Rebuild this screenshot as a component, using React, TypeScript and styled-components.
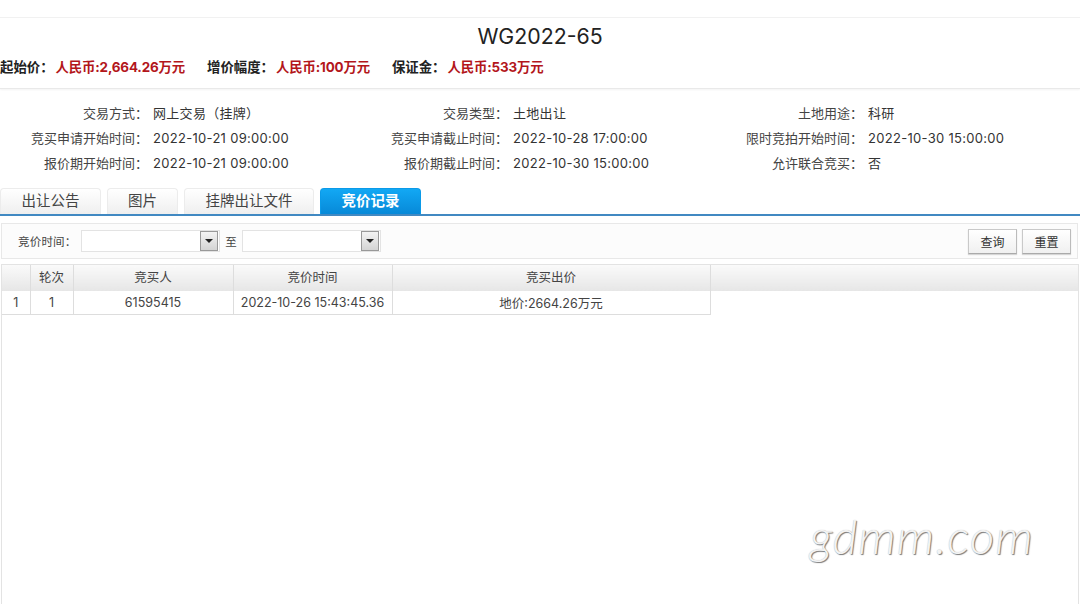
import React from 'react'
import styled, { createGlobalStyle } from 'styled-components'

const FONT = `Inter, "Noto Sans CJK SC", sans-serif`

const GlobalStyle = createGlobalStyle`
  html, body {
    margin: 0;
    padding: 0;
    background: #fff;
  }
  body {
    font-family: ${FONT};
  }
`

const Page = styled.div`
  position: relative;
  width: 1080px;
  height: 604px;
  overflow: hidden;
  display: flex;
  flex-direction: column;
  background: #fff;
  color: #333;
`

const TopStrip = styled.div`
  height: 17px;
  flex: none;
  border-bottom: 1px solid #f1f1f1;
`

const Header = styled.header`
  height: 71px;
  flex: none;
  box-sizing: border-box;
  border-bottom: 1px solid #e9e9e9;
  box-shadow: 0 1px 2px rgba(0, 0, 0, 0.05);
`

const Title = styled.h1`
  margin: 0;
  padding-top: 3px;
  height: 33px;
  box-sizing: border-box;
  font-size: 21.3px;
  line-height: 30px;
  font-weight: 400;
  text-align: center;
  color: #222;
`

const PriceRow = styled.div`
  display: flex;
  gap: 22px;
  height: 30px;
  align-items: center;
  font-size: 13.4px;
  font-weight: 700;
  color: #222;
`

const Price = styled.span`
  margin-left: 2px;
  letter-spacing: -0.15px;
  color: #b3161b;
`

const InfoGrid = styled.div`
  display: grid;
  grid-template-columns: 148px 212px 148px 208px 147px 1fr;
  grid-auto-rows: 25px;
  padding-top: 11px;
  height: 99px;
  flex: none;
  box-sizing: border-box;
  font-size: 13px;
  align-items: center;
`

const InfoLabel = styled.div`
  text-align: right;
  color: #444;
  white-space: nowrap;
`

const InfoValue = styled.div`
  padding-left: 5px;
  letter-spacing: 0.3px;
  color: #333;
  white-space: nowrap;
`

const TabBar = styled.div`
  display: flex;
  gap: 6px;
  height: 28px;
  flex: none;
  box-sizing: border-box;
  border-bottom: 2px solid #4189c2;
`

const Tab = styled.div<{ $active?: boolean; $width: number }>`
  width: ${({ $width }) => $width}px;
  height: 26px;
  padding-bottom: 5px;
  box-sizing: border-box;
  border: 1px solid ${({ $active }) => ($active ? '#0b9ae8' : '#ececec')};
  border-bottom: none;
  border-radius: 4px 4px 0 0;
  display: flex;
  align-items: center;
  justify-content: center;
  font-size: 14.5px;
  font-weight: ${({ $active }) => ($active ? 700 : 400)};
  color: ${({ $active }) => ($active ? '#fff' : '#444')};
  background: ${({ $active }) =>
    $active ? 'linear-gradient(#12a8f4, #0789d8)' : 'linear-gradient(#fff, #efefef)'};
`

const Toolbar = styled.div`
  margin: 7px 2px 0 1px;
  height: 36px;
  flex: none;
  box-sizing: border-box;
  border: 1px solid #e8e8e8;
  background: #fcfcfc;
  display: flex;
  align-items: center;
  padding: 0 6px 0 16px;
  font-size: 11.5px;
  color: #444;
`

const FieldLabel = styled.span`
  width: 63px;
  flex: none;
  letter-spacing: 0.2px;
  white-space: nowrap;
`

const Combo = styled.div`
  width: 139px;
  height: 22px;
  flex: none;
  box-sizing: border-box;
  border: 1px solid #e3e3e3;
  background: #fff;
  display: flex;
  justify-content: flex-end;
  align-items: center;
`

const ComboButton = styled.div`
  width: 18px;
  height: 20px;
  margin-right: 1px;
  box-sizing: border-box;
  border: 1px solid #999;
  background: linear-gradient(#f3f3f3, #d4d4d4);
  display: flex;
  align-items: center;
  justify-content: center;
`

const ComboArrow = styled.span`
  width: 0;
  height: 0;
  border-left: 4px solid transparent;
  border-right: 4px solid transparent;
  border-top: 4px solid #222;
`

const RangeWord = styled.span`
  width: 22px;
  flex: none;
  text-align: center;
`

const Spacer = styled.div`
  flex: 1;
`

const ActionButton = styled.button`
  width: 49px;
  height: 25px;
  padding: 0;
  margin-left: 5px;
  box-sizing: border-box;
  border: 1px solid #c9c9c9;
  border-bottom-color: #aaa;
  border-right-color: #bbb;
  background: linear-gradient(#fff, #f0f0f0);
  box-shadow: 0 1px 1px rgba(0, 0, 0, 0.15);
  font-family: ${FONT};
  font-size: 12px;
  color: #333;
`

const TablePanel = styled.div`
  margin: 5px 1px 0 1px;
  flex: 1;
  border: 1px solid #e3e3e3;
  border-bottom: none;
`

const Grid = styled.table`
  width: 100%;
  table-layout: fixed;
  border-collapse: collapse;
  font-size: 12.5px;
  color: #444;
`

const HeadCell = styled.th<{ $width?: number }>`
  ${({ $width }) => ($width ? `width: ${$width}px;` : '')}
  height: 26px;
  padding: 0 0 3px;
  box-sizing: border-box;
  font-weight: 400;
  text-align: center;
  border-right: 1px solid #ddd;
  background: linear-gradient(#fafafa, #e6e6e6);

  &:last-child {
    border-right: none;
  }
`

const BodyCell = styled.td<{ $blank?: boolean }>`
  height: 23px;
  padding: 0;
  text-align: center;
  ${({ $blank }) => ($blank ? '' : 'border-right: 1px solid #ddd; border-bottom: 1px solid #ddd;')}
`

const Watermark = styled.div`
  position: absolute;
  left: 810px;
  top: 506px;
  font-family: Lato, sans-serif;
  font-style: italic;
  font-weight: 300;
  font-size: 48px;
  line-height: 60px;
  letter-spacing: 1px;
  color: #f3f3f3;
  text-shadow: 1px 1px 1px #777, 0 0 1px #bbb;
  white-space: nowrap;
`

const info = [
  ['交易方式：', '网上交易（挂牌）', '交易类型：', '土地出让', '土地用途：', '科研'],
  ['竞买申请开始时间：', '2022-10-21 09:00:00', '竞买申请截止时间：', '2022-10-28 17:00:00', '限时竞拍开始时间：', '2022-10-30 15:00:00'],
  ['报价期开始时间：', '2022-10-21 09:00:00', '报价期截止时间：', '2022-10-30 15:00:00', '允许联合竞买：', '否'],
]

const tabs = [
  { label: '出让公告', width: 101 },
  { label: '图片', width: 71 },
  { label: '挂牌出让文件', width: 130 },
  { label: '竞价记录', width: 101, active: true },
]

function DateCombo() {
  return (
    <Combo>
      <ComboButton>
        <ComboArrow />
      </ComboButton>
    </Combo>
  )
}

export default function App() {
  return (
    <Page>
      <GlobalStyle />
      <TopStrip />
      <Header>
        <Title>WG2022-65</Title>
        <PriceRow>
          <span>起始价：<Price>人民币:2,664.26万元</Price></span>
          <span>增价幅度：<Price>人民币:100万元</Price></span>
          <span>保证金：<Price>人民币:533万元</Price></span>
        </PriceRow>
      </Header>
      <InfoGrid>
        {info.map((row) =>
          row.map((text, i) =>
            i % 2 === 0 ? (
              <InfoLabel key={text}>{text}</InfoLabel>
            ) : (
              <InfoValue key={row[i - 1] + text}>{text}</InfoValue>
            ),
          ),
        )}
      </InfoGrid>
      <TabBar>
        {tabs.map((tab) => (
          <Tab key={tab.label} $width={tab.width} $active={tab.active}>
            {tab.label}
          </Tab>
        ))}
      </TabBar>
      <Toolbar>
        <FieldLabel>竞价时间：</FieldLabel>
        <DateCombo />
        <RangeWord>至</RangeWord>
        <DateCombo />
        <Spacer />
        <ActionButton>查询</ActionButton>
        <ActionButton>重置</ActionButton>
      </Toolbar>
      <TablePanel>
        <Grid>
          <thead>
            <tr>
              <HeadCell $width={28} />
              <HeadCell $width={43}>轮次</HeadCell>
              <HeadCell $width={160}>竞买人</HeadCell>
              <HeadCell $width={159}>竞价时间</HeadCell>
              <HeadCell $width={318}>竞买出价</HeadCell>
              <HeadCell />
            </tr>
          </thead>
          <tbody>
            <tr>
              <BodyCell>1</BodyCell>
              <BodyCell>1</BodyCell>
              <BodyCell>61595415</BodyCell>
              <BodyCell>2022-10-26 15:43:45.36</BodyCell>
              <BodyCell>地价:2664.26万元</BodyCell>
              <BodyCell $blank />
            </tr>
          </tbody>
        </Grid>
      </TablePanel>
      <Watermark>gdmm.com</Watermark>
    </Page>
  )
}
